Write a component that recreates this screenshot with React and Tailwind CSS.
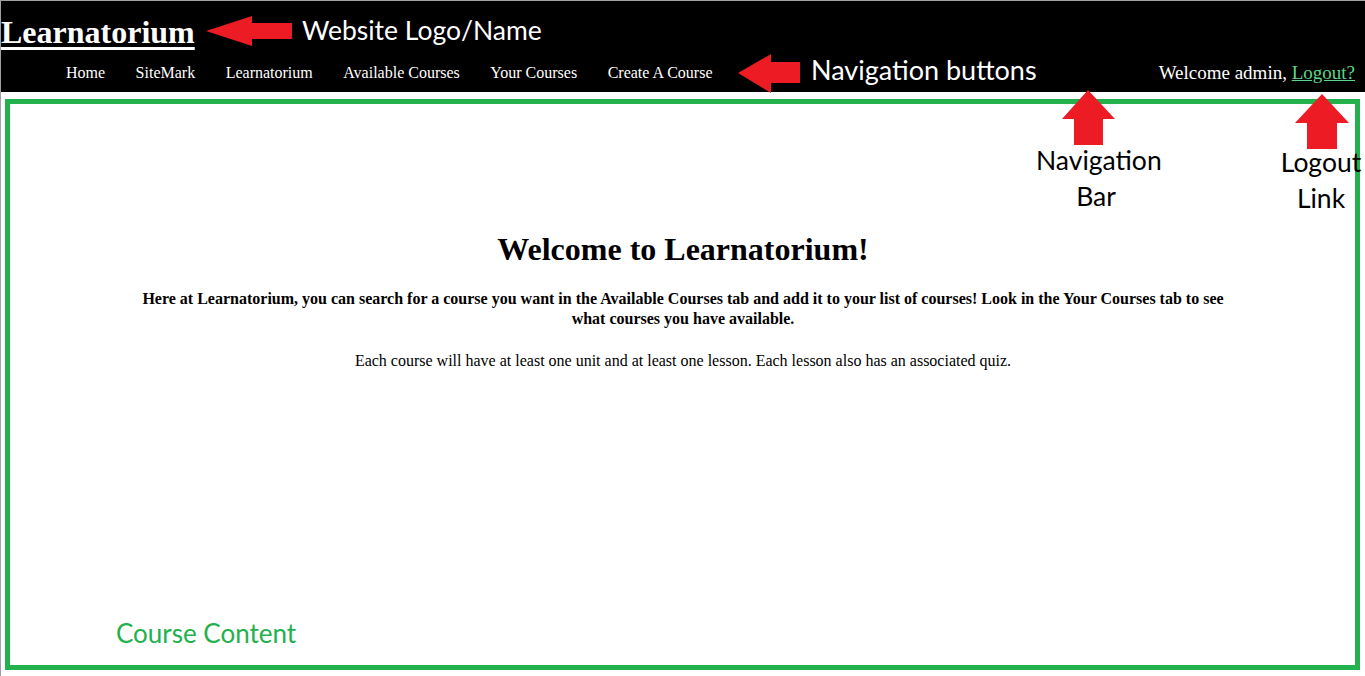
const navLinks = ['Home', 'SiteMark', 'Learnatorium', 'Available Courses', 'Your Courses', 'Create A Course'];

// red callout arrows drawn over the page (page coordinates)
const arrows = [
  '206,31 252,16 252,23 292,23 292,39 252,39 252,46',
  '738,73 771,54 771,62 800,62 800,83 771,83 771,93',
  '1088,90 1115,119 1103,119 1103,145 1074,145 1074,119 1062,119',
  '1322,94 1349,123 1337,123 1337,149 1307,149 1307,123 1295,123',
];

function Annotations() {
  return (
    <div className="pointer-events-none absolute inset-0 font-['Lato',sans-serif] text-[26.5px] leading-[36px]">
      <div className="absolute left-[5px] top-[99px] h-[571px] w-[1355px] border-[5px] border-[#22b14c]" />
      <svg className="absolute left-0 top-0" width="1365" height="676" viewBox="0 0 1365 676">
        {arrows.map((points) => (
          <polygon key={points} points={points} fill="#ed1c24" />
        ))}
      </svg>
      <div className="absolute left-[302px] top-[12px] text-white">Website Logo/Name</div>
      <div className="absolute left-[811px] top-[52px] text-[27px] text-white">Navigation buttons</div>
      <div className="absolute left-[1036px] top-[142px] w-[120px] text-center text-black">
        Navigation
        <br />
        Bar
      </div>
      <div className="absolute left-[1271px] top-[144px] w-[100px] text-center text-black">
        Logout
        <br />
        Link
      </div>
      <div className="absolute left-[116px] top-[615px] text-[26px] text-[#22b14c]">Course Content</div>
    </div>
  );
}

export default function App() {
  return (
    <div className="relative min-h-[676px] bg-white font-['Liberation_Serif',serif] text-black">
      <div className="min-h-[676px] border-l border-t border-[#a0a0a0]">
        <header className="bg-black pb-[9px] text-white">
          <h1 className="pt-[13px] text-[32px] font-bold leading-[36px]">
            <a href="#" className="underline decoration-[3px] underline-offset-[4px]">
              Learnatorium
            </a>
          </h1>
          <div className="mt-[13px] flex items-start justify-between pr-[10px]">
            <nav className="flex gap-[30.5px] pl-[65px] text-[16px] leading-[20px]">
              {navLinks.map((link) => (
                <a key={link} href="#">
                  {link}
                </a>
              ))}
            </nav>
            <div className="text-[19px] leading-[20px]">
              Welcome admin,{' '}
              <a href="#" className="text-[#5ad88a] underline">
                Logout?
              </a>
            </div>
          </div>
        </header>

        <main className="pt-[139px] text-center">
          <h1 className="text-[32px] font-bold leading-[36px]">Welcome to Learnatorium!</h1>
          <p className="mx-auto mt-[22px] w-4/5 text-[16px] font-bold leading-[20px]">
            Here at Learnatorium, you can search for a course you want in the Available Courses tab and add it to your
            list of courses! Look in the Your Courses tab to see what courses you have available.
          </p>
          <p className="mt-[22px] text-[16px] leading-[20px]">
            Each course will have at least one unit and at least one lesson. Each lesson also has an associated quiz.
          </p>
        </main>
      </div>
      <Annotations />
    </div>
  );
}
